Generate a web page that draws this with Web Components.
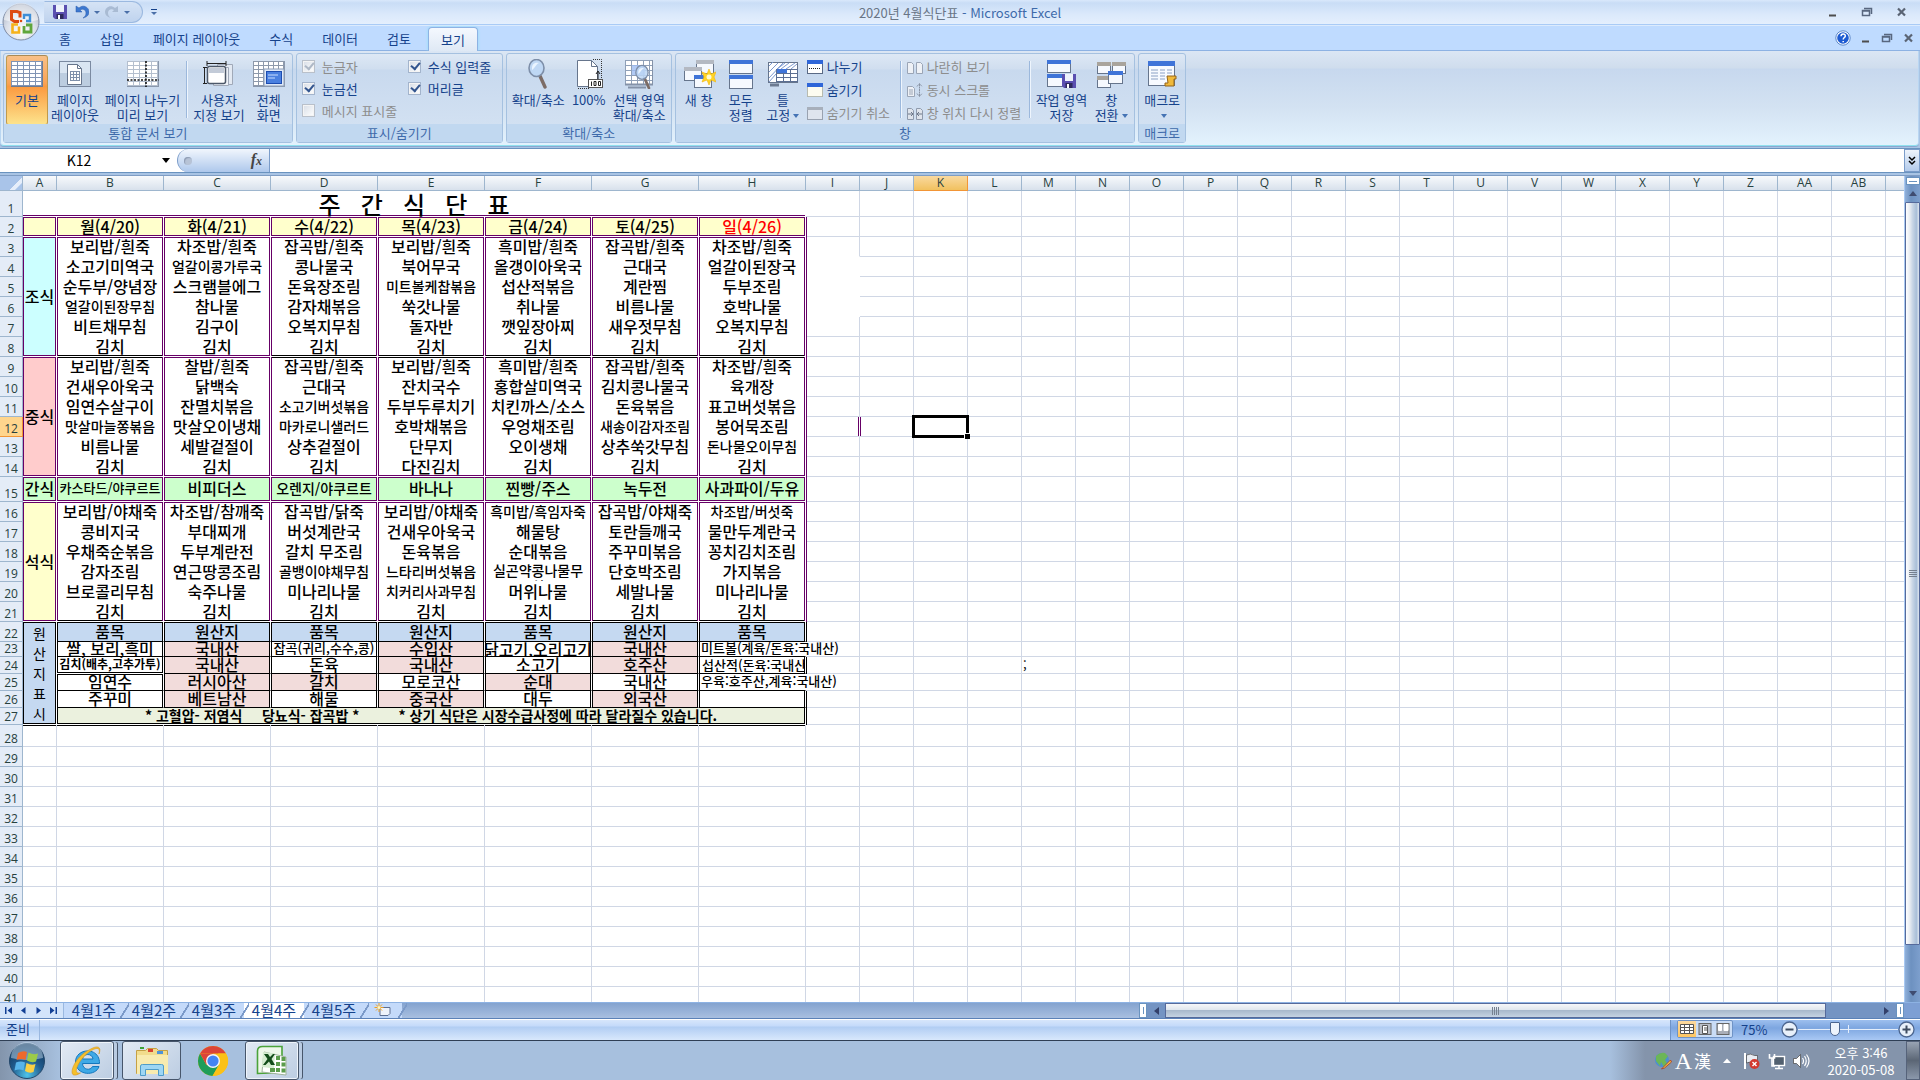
<!DOCTYPE html>
<html lang="ko">
<head>
<meta charset="utf-8">
<title>2020년 4월식단표 - Microsoft Excel</title>
<style>
body{margin:0;height:100vh;display:flex;flex-direction:column;overflow:hidden;background:#a9c4e4;
font:13px/15px "Noto Sans CJK KR","Liberation Sans",sans-serif;color:#15428b}
sheet-area{flex:1;min-height:0}
</style>
</head>
<body>
<title-bar caption="2020년 4월식단표" app="Microsoft Excel"></title-bar>
<tab-strip></tab-strip>
<ribbon-panel>
  <ribbon-group label="통합 문서 보기">
    <ribbon-button icon="grid" active>기본</ribbon-button>
    <ribbon-button icon="page">페이지<br>레이아웃</ribbon-button>
    <ribbon-button icon="breaks">페이지 나누기<br>미리 보기</ribbon-button>
    <ribbon-rule></ribbon-rule>
    <ribbon-button icon="custom">사용자<br>지정 보기</ribbon-button>
    <ribbon-button icon="full">전체<br>화면</ribbon-button>
  </ribbon-group>
  <ribbon-group label="표시/숨기기">
    <ribbon-stack style="--w:106px">
      <ribbon-check checked disabled>눈금자</ribbon-check>
      <ribbon-check checked>눈금선</ribbon-check>
      <ribbon-check disabled>메시지 표시줄</ribbon-check>
    </ribbon-stack>
    <ribbon-stack style="--w:95px">
      <ribbon-check checked>수식 입력줄</ribbon-check>
      <ribbon-check checked>머리글</ribbon-check>
    </ribbon-stack>
  </ribbon-group>
  <ribbon-group label="확대/축소">
    <ribbon-button icon="zoom">확대/축소</ribbon-button>
    <ribbon-button icon="hundred">100%</ribbon-button>
    <ribbon-button icon="zoomsel">선택 영역<br>확대/축소</ribbon-button>
  </ribbon-group>
  <ribbon-group label="창">
    <ribbon-button icon="newwin">새 창</ribbon-button>
    <ribbon-button icon="arrange">모두<br>정렬</ribbon-button>
    <ribbon-button icon="freeze" caret>틀<br>고정</ribbon-button>
    <ribbon-stack style="--w:93px;--h:23px">
      <ribbon-item icon="split">나누기</ribbon-item>
      <ribbon-item icon="hide">숨기기</ribbon-item>
      <ribbon-item icon="unhide" disabled>숨기기 취소</ribbon-item>
    </ribbon-stack>
    <ribbon-rule></ribbon-rule>
    <ribbon-stack style="--w:122px;--h:23px">
      <ribbon-item icon="side" disabled>나란히 보기</ribbon-item>
      <ribbon-item icon="sync" disabled>동시 스크롤</ribbon-item>
      <ribbon-item icon="reset" disabled>창 위치 다시 정렬</ribbon-item>
    </ribbon-stack>
    <ribbon-rule></ribbon-rule>
    <ribbon-button icon="savews">작업 영역<br>저장</ribbon-button>
    <ribbon-button icon="switch" caret>창<br>전환</ribbon-button>
  </ribbon-group>
  <ribbon-group label="매크로">
    <ribbon-button icon="macro" caret>매크로<br></ribbon-button>
  </ribbon-group>
</ribbon-panel>
<formula-bar cell="K12"></formula-bar>
<sheet-area></sheet-area>
<sheet-tabs></sheet-tabs>
<status-bar></status-bar>
<task-bar></task-bar>

<script>
const win=(x,y,w,h,c='#3f74d8')=>`<rect x="${x+.5}" y="${y+.5}" width="${w-1}" height="${h-1}" fill="#f6f9fe" stroke="#66758c"/><rect x="${x}" y="${y}" width="${w}" height="4" fill="${c}"/>`;
const lines=(x,y,w,h,cx,cy,c='#8f9db3')=>{let s='';for(let i=x;i<=x+w;i+=cx)s+=`M${i+.5} ${y}v${h}`;for(let j=y;j<=y+h;j+=cy)s+=`M${x} ${j+.5}h${w}`;return `<path d="${s}" stroke="${c}" fill="none"/>`};
const floppy=(x,y,s)=>`<g transform="translate(${x} ${y}) scale(${s})"><path d="M0 0h14v14H2L0 12z" fill="#5a4fb0"/><rect x="3" y="0" width="8" height="7" fill="#eef2fb"/><rect x="3.5" y="9" width="7" height="5" fill="#2d2a5c"/><rect x="5" y="10" width="2" height="4" fill="#fff"/></g>`;
const lens=(x,y,s)=>`<g transform="translate(${x} ${y}) scale(${s})"><path d="M12 17l5 11" stroke="#7c6c66" stroke-width="3.4" stroke-linecap="round"/><ellipse cx="8.500" cy="9" rx="7.500" ry="8.500" fill="#bcd6f4" fill-opacity=".85" stroke="#7d8ea8" stroke-width="1.600"/><path d="M4 9c0-5 4-6 7-5-3 1-4 5-7 7z" fill="#eaf4ff"/></g>`;
const ICONS={
grid:[32,28,`<rect x=".5" y="1.5" width="31" height="25" fill="#fff" stroke="#6b7a92"/>`+lines(0,1,31,25,6,4,'#8094b4')],
page:[32,28,`<rect x=".5" y="1.5" width="31" height="25" fill="#d9e5f2" stroke="#7b8aa1"/><path d="M1 13h30v13H1z" fill="#bccde0"/><path d="M8.500 4.500h10l4 4v16h-14z" fill="#fff" stroke="#66758c"/><path d="M18.500 4.500v4h4" fill="none" stroke="#66758c"/>`+lines(11,11,9,10,3,3,'#7f90aa')],
breaks:[32,28,`<rect x=".5" y="1.500" width="31" height="25" fill="#fff" stroke="#8a98ad"/>`+lines(0,1,31,25,6,4,'#b4bfce')+`<path d="M19 1v26M0 20h32" stroke="#111" stroke-width="1.600" stroke-dasharray="2 1.500"/>`],
custom:[32,28,`<path d="M14.500 4.500h15v20h-15z" fill="#e3e9f2" stroke="#a0a9b8"/><path d="M10.500 7.500h15v18h-15z" fill="#eef2f8" stroke="#a0a9b8"/><rect x="4.500" y="6.500" width="18" height="17" rx="2" fill="#fff" stroke="#4d5869" stroke-width="1.500"/><rect x="6" y="8" width="15" height="5" fill="#c3cbd8"/><path d="M4 3.500h19M4 1v5M23 1v5M1.500 7v17M0 7.500h4M0 23.500h4" stroke="#222" fill="none"/>`],
full:[32,28,`<rect x=".5" y="1.500" width="31" height="25" fill="#fff" stroke="#8a98ad"/>`+lines(0,1,31,25,5,4,'#8d99ab')+`<rect x="11" y="9" width="20" height="17" fill="#dfe9f8" stroke="#8d9db5"/><rect x="13.500" y="11.500" width="15" height="12" fill="#4a80e0" stroke="#1c4cb0"/><path d="M15 15h10M15 18h7" stroke="#c9deff"/>`],
zoom:[22,30,lens(1,0,1)],
hundred:[30,30,`<path d="M3.500 1.500h14l6 6v20h-20z" fill="#fff" stroke="#66758c"/><path d="M17.500 1.500v6h6" fill="none" stroke="#66758c"/><path d="M19 .5h8.500v20M4 29.500h11" stroke="#333" fill="none" stroke-dasharray="1 1"/><path d="M24 12v8M22 15l2-3 2 3" stroke="#222" fill="none"/><rect x="14.500" y="20.500" width="14" height="8" fill="#fff" stroke="#555"/><path d="M17.500 22.500v4.500M20 22.500h2v4h-2zM24.500 22.500h2v4h-2z" stroke="#222" fill="none"/>`],
zoomsel:[32,30,`<rect x="2.500" y="1.500" width="27" height="24" fill="#fff" stroke="#8492a8"/>`+lines(2,1,27,24,6,5,'#8fa0b8')+`<rect x="9" y="6" width="13" height="10" fill="#9dbdf2" opacity=".8"/><path d="M2 25.500h28M5 28.500h18" stroke="#8492a8" stroke-width="2"/>`+lens(12,6,.82)],
newwin:[34,30,win(14,1,18,14,'#b4b9c2')+win(2,8,18,14,'#b4b9c2')+win(12,16,18,13)+`<path d="M27 10l2 5 5-2-2 5 2 5-5-2-2 5-2-5-5 2 2-5-2-5 5 2z" fill="#ffd426" stroke="#f3b50c" stroke-width=".6"/><circle cx="27" cy="18" r="2.500" fill="#fffbd0"/>`],
arrange:[26,30,win(1,1,24,14)+win(1,16,24,14)],
freeze:[32,28,`<rect x="1.500" y="2.500" width="29" height="20" fill="#fff" stroke="#66758c"/><path d="M2 6l4-4M2 12l9-9M2 18l14-15M10 9l8-6M14 9l8-6M19 9l9-6M2 22l7-8M24 9l6-5" stroke="#7e9bd0" fill="none"/>`+lines(9,9,21,13,7,4,'#5c6f92')+`<rect x="10" y="9" width="10" height="4" fill="#3f74d8"/><path d="M3 25h9" stroke="#6d7b91" stroke-width="3"/>`],
split:[16,16,`<rect x=".5" y="2.500" width="15" height="12" fill="#fff" stroke="#5a6a85"/><rect y="1" width="16" height="4" fill="#2f66d8"/><path d="M2 9.500h12" stroke="#222" stroke-dasharray="1 1"/>`],
hide:[16,16,`<rect x=".5" y="2.500" width="15" height="12" fill="#fdfcf0" stroke="#8b8b70" stroke-dasharray="1 1"/><rect y="1" width="16" height="4" fill="#2f66d8"/>`],
unhide:[16,16,`<rect x=".5" y="2.500" width="15" height="12" fill="#dfe5ee" stroke="#99a2b0"/><rect y="2" width="16" height="3" fill="#a7afbb"/>`],
side:[16,16,`<path d="M.5 3.500h4l2 2v9h-6zM9.500 3.500h4l2 2v9h-6z" fill="#eef1f6" stroke="#9aa5b6"/>`],
sync:[16,16,`<path d="M.5 4.500h5l2 2v8h-7z" fill="#eef1f6" stroke="#9aa5b6"/><path d="M2 8h4M2 10h4M2 12h4" stroke="#9aa5b6"/><path d="M12.500 2v12M10 4.500l2.500-3 2.500 3M10 11.500l2.500 3 2.500-3" stroke="#8a94a5" fill="none" stroke-dasharray="2 .5"/>`],
reset:[16,16,`<path d="M.5 3.500h4l2 2v9h-6zM9.500 3.500h4l2 2v9h-6z" fill="#dfe4ec" stroke="#8f9aac"/><path d="M1 9h5M10 9h5M4 7l2 2-2 2M12 7l-2 2 2 2" stroke="#6d788a" fill="none"/>`],
savews:[32,30,win(2,1,24,13)+win(2,15,24,13)+floppy(17,15,1)],
switch:[32,30,win(2,3,14,12,'#a9a49c')+win(17,3,14,12,'#a9a49c')+win(2,17,14,12,'#a9a49c')+win(13,12,15,13)],
macro:[32,28,`<rect x="2.500" y="2.500" width="26" height="23" fill="#f7faff" stroke="#66758c"/><rect x="2" y="1" width="27" height="5" fill="#3f74d8"/><path d="M5 10h7M5 13h7M5 16h7M5 19h7M14 10h5M14 13h5M14 16h5M14 19h5M21 10h5M21 13h5" stroke="#8aa0c4"/><path d="M21 16h9v3h-2v7h-9v-3h3z" fill="#f0b93a" stroke="#94651a"/>`],
save:[14,14,floppy(0,0,1)],
undo:[14,14,`<path d="M1 1v6h6L5 5c3-2 6 0 6 3 0 2-1 4-3 5 4-1 6-3 6-6 0-5-6-8-10-4z" fill="#3c78d0" stroke="#2858a8" stroke-width=".5"/>`],
redo:[14,14,`<path d="M13 1v6H7l2-2C6 3 3 5 3 8c0 2 1 4 3 5-4-1-6-3-6-6 0-5 6-8 10-4z" fill="#a9bbd3"/>`],
min:[10,12,`<path d="M1 9.500h7" stroke="#4d4d4d" stroke-width="2"/>`],
max:[12,12,`<path d="M3 2.500h7.500V8M1.500 4.500h7v5h-7zM1 5h8" stroke="#58677f" fill="none" stroke-width="1.500"/>`],
close:[12,12,`<path d="M2 2.500l7 7M9 2.500l-7 7" stroke="#5a6474" stroke-width="2.200"/>`],
help:[16,16,`<circle cx="8" cy="8" r="7.200" fill="#fff" stroke="#5b87c9"/><circle cx="8" cy="8" r="5.800" fill="#1d5bd2"/><path d="M6 6.300c0-3 4.300-3 4.300-.4C10.300 7.600 8.200 7.500 8.200 9.400M8.200 11v1.300" stroke="#fff" stroke-width="1.500" fill="none"/>`],
office:[38,38,`<defs><radialGradient id="o" cx=".5" cy=".75" r=".7"><stop offset="0" stop-color="#fff"/><stop offset=".6" stop-color="#d9dee8"/><stop offset="1" stop-color="#aab3c4"/></radialGradient></defs><circle cx="19" cy="19" r="18" fill="url(#o)" stroke="#7f8ca5"/><path d="M2 17a17 17 0 0134 0q-17 5-34 0z" fill="#fff" opacity=".5"/><g fill="none" stroke-width="3"><path d="M18 14.500v-5l-3-1H9.500v8l3 2H17" stroke="#dd4a12"/><path d="M22 16v-4h6v6h-4" stroke="#3f8fd8" stroke-width="2.400"/><path d="M16 21.500h-5.500v8H17v-6" stroke="#f6b21a" stroke-width="2.600"/><path d="M22 23v6h7v-7h-5" stroke="#5fa63c" stroke-width="2.800"/></g><circle cx="19" cy="18" r="1.300" fill="#dd4a12"/>`],
first:[9,9,`<path d="M1 1h1.500v7H1zM8 1v7L3.500 4.500z" fill="#123f94"/>`],
prev:[9,9,`<path d="M6.500 1v7L2 4.500z" fill="#123f94"/>`],
next:[9,9,`<path d="M2.500 1v7L7 4.500z" fill="#123f94"/>`],
last:[9,9,`<path d="M6.500 1H8v7H6.500zM1 1v7l4.500-3.500z" fill="#123f94"/>`],
newsheet:[18,14,`<path d="M6 4.500h10v6l-2 2H6z" fill="#eef3fb" stroke="#5d6f92"/><path d="M5 0v9M.5 4.500h9M2 1.500l6 6M8 1.500l-6 6" stroke="#f0a020"/><circle cx="5" cy="4.500" r="1.500" fill="#fff8c0"/>`],
vnorm:[18,16,`<path d="M2.500 3.500h13v9h-13zM2.500 6.500h13M2.500 9.500h13M6.500 3.500v9M11.500 3.500v9" fill="#fff" stroke="#555"/>`],
vpage:[18,16,`<rect x="3" y="2.500" width="12" height="11" fill="#b9bec7" stroke="#666"/><path d="M6.500 4.500h5v8h-5z" fill="#fff" stroke="#555"/><path d="M8 7h3M8 9h3" stroke="#555"/>`],
vbreak:[18,16,`<rect x="3" y="2.500" width="12" height="11" fill="#a9aeb8" stroke="#666"/><path d="M4.500 3.500h3v6h-3zM10 3.500h4v6h-4z" fill="#fff" stroke="#fff"/>`],
minus:[17,17,`<circle cx="8.500" cy="8.500" r="7.500" fill="#e8f0fa" stroke="#4c6690" stroke-width="1.300"/><path d="M4.500 8.500h8" stroke="#3f4c60" stroke-width="2"/>`],
plus:[17,17,`<circle cx="8.500" cy="8.500" r="7.500" fill="#e8f0fa" stroke="#4c6690" stroke-width="1.300"/><path d="M4.500 8.500h8M8.500 4.500v8" stroke="#3f4c60" stroke-width="2"/>`],
start:[38,38,`<defs><radialGradient id="s" cx=".5" cy=".9" r=".9"><stop offset="0" stop-color="#4fc4ea"/><stop offset=".5" stop-color="#205a8c"/><stop offset="1" stop-color="#0f3358"/></radialGradient></defs><circle cx="19" cy="19" r="17.500" fill="url(#s)" stroke="#23476a"/><path d="M3 16a16 16 0 0132 0q-16 4-32 0z" fill="#d6eafa" opacity=".45"/><path d="M10 11q5-3 9-1l-1.500 8q-4-2-9 0z" fill="#ee6a2c"/><path d="M20.500 10.500q5 3 9.500 1l-2 8q-4 2-9-1z" fill="#9ccb48"/><path d="M8 20.500q5-2 9 0l-1.500 8q-4-2-9 0z" fill="#58b4ea"/><path d="M18.500 21q5 3 9 1l-2 8q-4 2-8.500-1z" fill="#fbd044"/>`],
ie:[32,32,`<path d="M28.500 18.500H11.500c.3 6.500 8 7.500 10 3h6.500C25 31.500 5 31 4.500 17 4.500 2.500 29 1.500 28.500 18.500zM11.500 14h10.500c-.5-6-10-6-10.500 0z" fill="#3fa9e6" stroke="#1577bd"/><path d="M28 9c3-8-2-9-10-4C7 10-1 24 1.500 29c1 2 5 1 8-1C5 29 4 26 7 20 11 12 19 5 25 3.500c3-.5 4 1 3 5.500z" fill="#f5c02c" stroke="#d9961a" stroke-width=".6"/>`],
folder:[34,32,`<path d="M1.500 5.500h9l2-2h9l2 2h9v23h-31z" fill="#f1dc8c" stroke="#c5a044"/><rect x="5" y="2" width="4" height="2" fill="#3da336"/><rect x="13" y="4" width="5" height="3" fill="#d9432f"/><rect x="22" y="6" width="6" height="3" fill="#4d93da"/><path d="M2 10h31v19H2z" fill="#f8ebaf"/><path d="M5.500 30.500V21q0-1.500 2-1.500h19q2 0 2 1.500v9.500h-5v-6h-13v6z" fill="#9ed6f4" stroke="#4f9cc8"/>`],
chrome:[32,32,`<circle cx="16" cy="16" r="15" fill="#fbc116"/><path d="M3 8.500A15 15 0 0129 8.500H16z" fill="#db4437"/><path d="M3 8.500A15 15 0 0015.500 31L22 19.500 9.500 20z" fill="#1f9d58"/><path d="M3 8.500L9.500 20 16 8.500z" fill="#db4437"/><path d="M29 8.500A15 15 0 0115.500 31l7-11.500L21 8.500z" fill="#fbc116"/><circle cx="16" cy="16" r="7" fill="#f5f5f5"/><circle cx="16" cy="16" r="5.600" fill="#4484f3"/>`],
xl:[32,32,`<path d="M1.500 28.500V6q0-4.500 5-4.500h19.500v26z" fill="#eef7ea" stroke="#4ba33a" stroke-width="1.600"/><path d="M8 7l22 5v18l-24-3z" fill="#fff" stroke="#9fb39a"/><path d="M7 7l12 1.500-1 15L6 22z" fill="#d5ecd0"/><path d="M8 9h4l2 3 3-3h2l-3.500 5 3.500 6h-4l-2-3.500L9.500 20H7l4.500-6z" fill="#134c1a"/><path d="M20 11h4v4h-4zM25.500 12h4v4h-4zM20 17h4v4h-4zM25.500 17.500h4v4h-4zM14 23h5v4h-5zM20 23h4v4h-4zM25.500 23.500h4v4h-4z" fill="#5b9c4c"/>`],
globe:[18,18,`<circle cx="8" cy="8" r="7" fill="#4d8fd0"/><path d="M2 4q4-4 9-3l3 3-3 4 2 3-3 4-3-5-1 4-4-5z" fill="#6cb658"/><path d="M16.500 8l-7 7-2 2 3-1 7-6z" fill="#f8c53c" stroke="#a3322a" stroke-width=".8"/>`],
up:[12,12,`<path d="M2 8l4-4.500L10 8z" fill="#fff"/>`],
flag:[20,18,`<path d="M3 1v16" stroke="#fff" stroke-width="2"/><path d="M4.500 3q4-2 8 .5h3V11h-4q-3-2-7 0z" fill="#e8ecf2" stroke="#333" stroke-width=".6"/><circle cx="12.500" cy="12" r="5" fill="#d2392e"/><path d="M10.500 10l4 4M14.500 10l-4 4" stroke="#fff" stroke-width="1.400"/>`],
net:[18,18,`<rect x="5.500" y="4.500" width="11" height="9" fill="#52606f" stroke="#fff" stroke-width="1.400"/><path d="M7 16.500h8M11 14v2" stroke="#fff" stroke-width="1.500"/><path d="M1.500 2v4h5V2M4 6v8h3" stroke="#fff" stroke-width="1.600" fill="none"/>`],
vol:[18,18,`<path d="M1.500 6.500h3l4-4v13l-4-4h-3z" fill="#fff" stroke="#444" stroke-width=".7"/><path d="M10.500 6q2 3 0 6M12.500 4q3.500 5 0 10M14.500 2.500q5 6.500 0 13" stroke="#fff" fill="none" stroke-width="1.200"/>`]
};
const icon=(n,extra='')=>{const [w,h,b]=ICONS[n];return `<svg width="${w}" height="${h}" viewBox="0 0 ${w} ${h}" aria-hidden="true" ${extra}>${b}</svg>`};
const BASE=`:host,*{box-sizing:border-box}button{font:inherit;color:inherit;background:none;border:0;padding:0;margin:0}svg{display:block;flex:none}input{font:inherit;margin:0}`;
function define(name,css,html,after){
  customElements.define(name,class extends HTMLElement{
    connectedCallback(){
      if(this.shadowRoot)return;
      this.attachShadow({mode:'open'}).innerHTML=`<style>${BASE}${css}</style>`+(typeof html==='function'?html(this):html);
      if(after)after(this.shadowRoot,this);
    }
  });
}
const wins=`<button aria-label="최소화">${icon('min')}</button><button aria-label="이전 크기로">${icon('max')}</button><button aria-label="닫기">${icon('close')}</button>`;

define('title-bar',`
:host{display:flex;position:relative;z-index:2;height:25px;justify-content:space-between;background:linear-gradient(#d9e8fb,#c9ddf6 3px,#dbe9fb 60%,#e4effd);border-bottom:1px solid #a9cbf6}
.orb{position:absolute;left:2px;top:3px}
.bar,.ctl{flex:1 1 0;display:flex;align-items:center;padding:0 12px}
.qat{display:flex;align-items:center;gap:8px;height:22px;margin-left:32px;padding:0 8px 0 8px;width:99px;border:1px solid #9bb9e0;border-left-color:transparent;border-radius:0 12px 12px 0;background:linear-gradient(#d5e3f5,#bfd3ee)}
.c{width:0;height:0;border:3px solid transparent;border-top-color:#4a6fa8;border-bottom:0}
.qat .c{margin-left:-3px;margin-right:-3px}
.more{margin-left:8px;border-top:1px solid #15428b;padding-top:2px}
h1{margin:0;font:inherit;line-height:25px;color:#3e6aaa;white-space:pre}
h1 span{color:#697586}
.ctl{justify-content:flex-end;gap:23px}`,
el=>`<button class="orb" aria-label="Office 단추">${icon('office')}</button>
<div class="bar"><div class="qat"><button aria-label="저장">${icon('save')}</button><button aria-label="취소">${icon('undo')}</button><i class="c"></i><button aria-label="다시 실행">${icon('redo')}</button><i class="c"></i></div><span class="more"><i class="c" style="display:block"></i></span></div>
<h1><span>${el.getAttribute('caption')}</span> - ${el.getAttribute('app')}</h1><div class="ctl">${wins}</div>`);

define('tab-strip',`
:host{display:flex;align-items:flex-end;height:26px;padding:0 5px 0 47px;background:#bfdbff;border-top:1px solid #dcebfd;border-bottom:1px solid #8db2e3}
nav{display:flex;flex:1;align-self:stretch;align-items:flex-end;gap:5px}
nav button{padding:0 12px;line-height:23px;height:24px}
nav .on{padding:0 12px;border:1px solid #8db2e3;border-bottom:0;border-radius:4px 4px 0 0;background:linear-gradient(#f4f8fe,#dfe9f5);box-shadow:0 0 3px #8fe0f5;height:24px;margin-bottom:-1px;line-height:21px}
.ctl{display:flex;align-items:center;gap:10px;height:24px}`,
`<nav>${['홈','삽입','페이지 레이아웃','수식','데이터','검토','보기'].map(t=>`<button${t==='보기'?' class="on"':''}>${t}</button>`).join('')}</nav><div class="ctl"><button aria-label="도움말">${icon('help')}</button>${wins}</div>`);

define('ribbon-panel',`
:host{display:flex;gap:3px;height:95px;padding:2px 2px 2px;margin:0 1px 2px 0;background:linear-gradient(#dbe6f4,#cfdded 17px,#c7d8ee 18px,#d3e2f2 60%,#e3f2fd);border:1px solid #b9d6f2;border-top:0;border-bottom-color:#8fe0ee;border-radius:0 0 4px 4px;box-shadow:0 1px #8aa8d0}`,`<slot></slot>`);

define('ribbon-group',`
:host{display:flex;flex-direction:column;border:1px solid #a5c1e0;border-radius:3px;background:linear-gradient(#dde8f5,#d0deef 15px,#c8d9ee 16px,#d5e3f3)}
.row{flex:1;display:flex;padding:1px 2px 0;min-height:0}
.lab{height:18px;line-height:17px;text-align:center;background:#c1d8f0;color:#3e6aaa}`,
el=>`<div class="row"><slot></slot></div><div class="lab">${el.getAttribute('label')}</div>`);

define('ribbon-rule',`:host{display:block;width:1px;margin:6px 3px 6px;background:#9cb8dc;box-shadow:1px 0 #eef5fd}`,``);

define('ribbon-button',`
:host{display:block}
button{display:flex;flex-direction:column;align-items:center;min-width:42px;height:70px;padding:0 2px;border:1px solid transparent;border-radius:3px;white-space:nowrap}
.i{height:36px;display:flex;align-items:center}
.t{line-height:15px;text-align:center}
:host([active]) button{border-color:#a98a55 #c09a4c #f2c94c;background:linear-gradient(#f8c088,#f9a355 40%,#fb9a40 45%,#fde38c)}
.c{display:inline-block;border:3px solid transparent;border-top:4px solid #4573b4;border-bottom:0;margin-left:3px;vertical-align:2px}`,
el=>`<button><span class="i">${icon(el.getAttribute('icon'))}</span><span class="t"><slot></slot>${el.hasAttribute('caret')?'<i class="c"></i>':''}</span></button>`);

define('ribbon-stack',`:host{display:flex;flex-direction:column;width:var(--w);padding:0 3px}::slotted(*){height:var(--h,22px)}`,`<slot></slot>`);
define('ribbon-check',`
:host{display:flex}
label{display:flex;align-items:center;gap:7px;white-space:nowrap}
input{appearance:none;width:13px;height:13px;border:1px solid #a3b4cc;background:linear-gradient(135deg,#d7dde6,#fff);box-shadow:inset 0 0 0 1px #f4f4f4;position:relative}
input:checked::after{content:"";position:absolute;left:2px;top:1px;width:7px;height:4px;border:solid #34568f;border-width:0 0 2px 2px;transform:rotate(-50deg)}
:host([disabled]) label{color:#8d8d8d}:host([disabled]) input{border-color:#b9c0ca}:host([disabled]) input::after{border-color:#aeb8c6}`,
el=>`<label><input type="checkbox"${el.hasAttribute('checked')?' checked':''}${el.hasAttribute('disabled')?' disabled':''}><span><slot></slot></span></label>`);
define('ribbon-item',`
:host{display:flex}button{display:flex;align-items:center;gap:4px;white-space:nowrap}
button:disabled{color:#8d8d8d}`,
el=>`<button${el.hasAttribute('disabled')?' disabled':''}>${icon(el.getAttribute('icon'))}<span><slot></slot></span></button>`);

define('formula-bar',`
:host{display:flex;height:25px;border:1px solid #6a93bf;border-width:1px 0;background:#fff;color:#000;margin-bottom:2px}
input{border:0;background:none;outline:0}
.name{display:flex;align-items:center;width:177px}
.name input{width:158px;text-align:center;font-size:14px}
.c{border:4px solid transparent;border-top:5px solid #000;border-bottom:0;margin-left:4px}
.fx{display:flex;align-items:center;justify-content:space-between;width:93px;padding:0 7px 0 6px;border:1px solid #7b9cc9;border-width:0 1px 0 1px;border-radius:12px 0 0 12px;background:linear-gradient(#f1f6fd,#aec8ec)}
.fx b{width:8px;height:8px;border-radius:50%;background:#b7c3d6;box-shadow:inset 1px 1px 1px #8e9cb4}
.fx span{font:italic bold 16px/20px "Liberation Serif",serif;color:#444}
.fx small{font-size:12px}
.f{flex:1;min-width:0}
.x{width:16px;border:1px solid #7b9cc9;background:linear-gradient(#eef4fc,#b3cbeb);display:flex;align-items:center;justify-content:center}`,
el=>`<div class="name"><input aria-label="이름 상자" value="${el.getAttribute('cell')}"><i class="c"></i></div><div class="fx"><b></b><span>f<small>x</small></span></div><input class="f" aria-label="수식 입력줄"><button class="x" aria-label="수식 입력줄 확장"><svg width="8" height="10"><path d="M1 1l3 3 3-3M1 5l3 3 3-3" stroke="#000" fill="none" stroke-width="1.500"/></svg></button>`);

/* Sheet data: each leading ~ takes a cell one text size down */
const P='#660066',K='#000',G='#d0d7e5';
const HEAD=['','월(4/20)','화(4/21)','수(4/22)','목(4/23)','금(4/24)','토(4/25)','일(4/26)'];
const DATA={
3:'보리밥/흰죽|차조밥/흰죽|잡곡밥/흰죽|보리밥/흰죽|흑미밥/흰죽|잡곡밥/흰죽|차조밥/흰죽',
4:'소고기미역국|~얼갈이콩가루국|콩나물국|북어무국|올갱이아욱국|근대국|얼갈이된장국',
5:'순두부/양념장|스크램블에그|돈육장조림|~미트볼케찹볶음|섭산적볶음|계란찜|두부조림',
6:'~얼갈이된장무침|참나물|감자채볶음|쑥갓나물|취나물|비름나물|호박나물',
7:'비트채무침|김구이|오복지무침|돌자반|깻잎장아찌|새우젓무침|오복지무침',
8:'김치|김치|김치|김치|김치|김치|김치',
9:'보리밥/흰죽|찰밥/흰죽|잡곡밥/흰죽|보리밥/흰죽|흑미밥/흰죽|잡곡밥/흰죽|차조밥/흰죽',
10:'건새우아욱국|닭백숙|근대국|잔치국수|홍합살미역국|김치콩나물국|육개장',
11:'임연수살구이|잔멸치볶음|~소고기버섯볶음|두부두루치기|치킨까스/소스|돈육볶음|표고버섯볶음',
12:'~맛살마늘쫑볶음|맛살오이냉채|~마카로니샐러드|호박채볶음|우엉채조림|~새송이감자조림|봉어묵조림',
13:'비름나물|세발겉절이|상추겉절이|단무지|오이생채|상추쑥갓무침|~돈나물오이무침',
14:'김치|김치|김치|다진김치|김치|김치|김치',
15:'~~카스타드/야쿠르트|비피더스|~오렌지/야쿠르트|바나나|찐빵/주스|녹두전|사과파이/두유',
16:'보리밥/야채죽|차조밥/참깨죽|잡곡밥/닭죽|보리밥/야채죽|~흑미밥/흑임자죽|잡곡밥/야채죽|~차조밥/버섯죽',
17:'콩비지국|부대찌개|버섯계란국|건새우아욱국|해물탕|토란들깨국|물만두계란국',
18:'우채죽순볶음|두부계란전|갈치 무조림|돈육볶음|순대볶음|주꾸미볶음|꽁치김치조림',
19:'감자조림|연근땅콩조림|~골뱅이야채무침|~느타리버섯볶음|~실곤약콩나물무침|단호박조림|가지볶음',
20:'브로콜리무침|숙주나물|미나리나물|~치커리사과무침|머위나물|세발나물|미나리나물',
21:'김치|김치|김치|김치|김치|김치|김치',
22:'품목|원산지|품목|원산지|품목|원산지|품목',
23:'쌀, 보리,흑미|국내산|~~잡곡(귀리,수수,콩)|수입산|닭고기,오리고기|국내산|미트볼(계육/돈육:국내산)',
24:'~~~김치(배추,고추가투)|국내산|돈육|국내산|소고기|호주산|섭산적(돈육:국내산)',
25:'임연수|러시아산|갈치|모로코산|순대|국내산|우육:호주산,계육:국내산)',
26:'주꾸미|베트남산|해물|중국산|대두|외국산|'};
const SIDE={3:['조식','#ccffff',6],9:['중식','#ffcccc',6],15:['간식','#ccffcc',1],16:['석식','#ffffcc',6],22:['원<br>산<br>지<br>표<br>시','#c5d9f1',6]};
const ROSE={23:[2,4,6],24:[2,4,6],25:[2,3,5],26:[2,4,6]};
const HGT=r=>r===1?26:r===15?25:r===23?15:r>=24&&r<=27?17:r===28?22:20;
const name=i=>i<26?String.fromCharCode(65+i):'A'+String.fromCharCode(39+i);
const box=o=>{const a=[];if(o.l)a.push(`inset 1px 0 ${o.l}`);if(o.r)a.push(`inset -1px 0 ${o.r}`);if(o.t)a.push(`inset 0 1px ${o.t}`);if(o.b)a.push(`inset 0 -1px ${o.b}`);return a.length?`box-shadow:${a.join(',')};`:''};
const strip=(c,pos)=>`linear-gradient(${c},${c}) ${pos} no-repeat border-box`;
function sheet(){
  const N=30;
  let h='<colgroup><col style="width:23px"><col style="width:34px">'+'<col style="width:107px">'.repeat(7)+'<col style="width:54px">'.repeat(N-8)+'</colgroup><thead><tr><th class="corner"></th>';
  for(let c=0;c<N;c++)h+=`<th${c===10?' class="hot"':''}>${c<28?name(c):''}</th>`;
  h+='</tr></thead><tbody>';
  for(let r=1;r<=41;r++){
    const H=HGT(r);
    h+=`<tr style="height:${H}px"><th${r===12?' class="hot"':''}>${r}</th>`;
    for(let c=0;c<N;c++){
      let s='',t='',cls='';
      if(r===1&&c<8){if(c===0)h+=`<td class="m title" colspan="8" style="${box({b:P})}"><div>주   간   식   단   표</div></td>`;continue}
      if(c<8&&r<=27){
        if(c===0&&r>2){
          if(SIDE[r]){const [x,bg,n]=SIDE[r],k=r===22?K:P;h+=`<td class="m${r===22?' vert':''}" rowspan="${n}" style="background:${bg};background-clip:padding-box;${box({l:k,r:k,t:k,b:k})}"><div>${x}</div></td>`}
          continue;
        }
        if(r===27){if(c===1)h+=`<td class="m s1 note" colspan="7" style="background:#ebf1de;${box({l:K,r:K,b:K})}"><div>* 고혈압- 저염식     당뇨식- 잡곡밥 *          * 상기 식단은 시장수급사정에 따라 달라질수 있습니다.</div></td>`;continue}
        cls='m';
        if(r===2){t=HEAD[c];s='background:#ffffcc;'+(c===7?'color:#f00;':'')+box({l:P,r:P,t:P,b:P})}
        else{
          t=DATA[r].split('|')[c-1];
          const k=r>=22?K:P,o={l:k,r:k};
          const split=(c===2?P:K);
          if(r===3||r===15||r===16)o.t=P;
          if(r===14||r===15)o.b=P;
          if(r===8)o.b=split;
          if(r===9)o.t=split;
          if(r===21)o.b=K;
          if(r===22)o.t=K;
          if(r<21&&r!==8&&r!==14&&r!==15)s+='border-bottom:0;';
          if(r>=22&&!(r===24&&c===1))s+='border-bottom-color:#000;';
          if(r===24&&c===1)o.b=K;
          if(r===25&&c===1)o.t=K;
          if(c===7&&(r===23||r===25))delete o.r;
          if(r===15)s+='background:#ccffcc;';
          if(r===22)s+='background:#c5d9f1;';
          if(ROSE[r]&&ROSE[r].includes(c))s+='background:#f2dcdb;';
          if(c===7&&r>22&&r<26)cls+=r===24?' left clip':' left';
          if(c===5&&(r===19||r===23))cls+=r===19?' wrap':' clip';
          const n=t.match(/^~*/)[0].length;if(n){cls+=' s'+n;t=t.slice(n)}
          s+=box(o);
        }
      }else{
        const o={};
        if(c===8&&r>=2&&r<=27&&r!==23&&r!==25){
          s+=`border-bottom-color:transparent;background:${strip(r>=22?K:P,'0 0/1px 100%')}${r>=3&&r<=6?'':','+strip(G,'0 100%/100% 1px')};`;
        }
        if(c<8&&r===28)o.t=K;
        if(c===8&&r>=4&&r<=6)s+='border-right-color:#fff;';
        if(r===12&&c===8){o.r=P;s+='border-right-color:#fff;'}
        if(r===12&&c===9)o.l=P;
        if(r===12&&c===10)cls='sel';
        if(r===24&&c===12)t=';';
        s+=box(o);
      }
      h+=`<td${cls?` class="${cls}"`:''}${s?` style="${s}"`:''}>${t||cls==='sel'?`<div>${t}</div>`:''}</td>`;
    }
    h+='</tr>';
  }
  return h+'</tbody>';
}
define('sheet-area',`
:host{display:flex;overflow:hidden;border-top:1px solid #7f9dc4;background:#fff}
.view{flex:1;min-width:0;overflow:hidden}
table{border-spacing:0;table-layout:fixed;color:#000}
th{padding:0;font:12px/15px "Open Sans","Noto Sans",sans-serif;color:#27413e;border-right:1px solid #9eb6ce;border-bottom:1px solid #9eb6ce}
thead tr{height:15px}
thead th{height:15px;line-height:14px;background:linear-gradient(#f8fafc,#d8e1ec)}
tbody th{background:#e4ecf7;vertical-align:bottom;line-height:14px;height:inherit}
.corner{background:linear-gradient(135deg,#a9c4e9 65%,#e6eefa 66%,#e6eefa 80%,#a9c4e9 81%)}
thead .hot{background:linear-gradient(#f9d99f,#f1c15f);border-color:#f29536}
tbody .hot{background:#ffd58d;border-color:#f29536}
td{padding:0 0 0 1px;border-right:1px solid #d0d7e5;border-bottom:1px solid #d0d7e5;font-size:13px}
td.m{padding:0 0 2px;border-color:#fff;text-align:center;font-size:16px;font-weight:500;white-space:pre}
td>div{height:0;display:flex;align-items:center;justify-content:center;line-height:20px}
td:not(.m)>div{justify-content:flex-start}
td.s1{font-size:14px}td.s2{font-size:13px}td.s3{font-size:12px}
td.s3,td.note{font-weight:700}
td.title{font-size:24px;padding:0}
td.title>div{line-height:24px}
td.vert{font-weight:400;font-size:14px;padding:0}td.vert>div{height:100px;line-height:20px}
td.left{font-size:13px}td.left>div{justify-content:flex-start;padding-left:2px}
td.clip{padding:0}
td.clip>div{height:14px;overflow:hidden;margin:0 1px}
td.wrap{vertical-align:top;padding:0}
td.wrap>div{display:block;height:19px;overflow:hidden;white-space:normal;word-break:break-all;padding:0 6px;line-height:16px}
td.sel{position:relative}
td.sel>div{position:absolute;inset:-2px;height:auto;border:3px solid #000;margin:0}
td.sel>div::after{content:"";position:absolute;right:-4px;bottom:-4px;width:5px;height:5px;background:#000;box-shadow:-1px -1px 0 #fff}
.vs{width:16px;display:flex;flex-direction:column;align-items:center;background:linear-gradient(90deg,#8fb0da,#6d91c0 40%,#7d9fcd);border-left:1px solid #a9c9f2}
.box{width:14px;height:8px;margin-top:1px;background:#fff;border:1px solid #6a93bf;display:flex;align-items:center;justify-content:center}
.box i{width:8px;height:1px;background:#6a93bf}
.a{height:17px;display:flex;align-items:center}
.a i{border:4px solid transparent;border-bottom:5px solid #3f4c70;border-top:0}
.dn{flex:none;height:57px;align-items:flex-end;padding-bottom:6px}.dn i{border-bottom:0;border-top:5px solid #3f4c70}
.th{flex:1;width:15px;border:1px solid #566a9b;border-radius:1px;background:linear-gradient(90deg,#fff,#e6ebf1 30%,#c9d6e5 50%,#a9bfd8 80%,#dfe6ef);display:flex;align-items:center;justify-content:center}
.th i{width:8px;height:8px;background:repeating-linear-gradient(#75808f 0 1px,transparent 1px 2px)}`,
()=>`<div class="view"><table>${sheet()}</table></div><div class="vs"><div class="box"><i></i></div><div class="a"><i></i></div><div class="th"><i></i></div><div class="a dn"><i></i></div></div>`,
root=>{const t=root.querySelector('table');let w=0;t.querySelectorAll('col').forEach(c=>w+=parseInt(c.style.width));t.style.width=w+'px'});

define('sheet-tabs',`
:host{display:flex;height:17px;background:linear-gradient(#84a3cf,#a8bfe0);border:1px solid #8db2e3;border-width:1px 0;border-bottom-color:#5b82b8;overflow:hidden}
.nav{display:flex;align-items:center;gap:6px;padding:0 4px;width:64px;background:#d3e4fa;border-right:1px solid #9ab8e0}
.tabs{display:flex;flex:1;min-width:0;height:15px}
.tabs button{width:60px;font-size:15px;line-height:13px;padding-bottom:2px;display:flex;align-items:center;justify-content:center;white-space:nowrap;background:#c4dafa;position:relative}
.tabs button::after{content:"";position:absolute;right:-5px;top:0;width:9px;height:15px;background:linear-gradient(122deg,transparent 47%,#7a99c8 48%,#7a99c8 58%,transparent 60%);z-index:1}
.tabs .on{background:#fff}
.tabs .n{width:38px}
.grip{width:8px;height:15px;background:#fff;border:1px solid #6a93bf;display:flex;align-items:center;justify-content:center}
.grip i{width:1px;height:7px;background:#6a93bf}
.hs{flex:0 0 39%;display:flex;align-items:center;background:#7494c3}
.ar{width:18px;display:flex;justify-content:center}
.ar i{border:4px solid transparent;border-right:5px solid #33406a;border-left:0}
.ar.r{width:70px;justify-content:flex-end;padding-right:7px}
.ar.r i{border-right:0;border-left:5px solid #33406a}
.th{flex:1;height:15px;border:1px solid #566a9b;background:linear-gradient(#f6f7f9,#dfe6ee 45%,#a9b9cc 50%,#c5d3e2);display:flex;align-items:center;justify-content:center}
.th i{width:8px;height:8px;background:repeating-linear-gradient(90deg,#75808f 0 1px,transparent 1px 2px)}
.end{width:16px;background:#7d9fd4}`,
`<div class="nav">${['first','prev','next','last'].map(i=>`<button aria-label="${i}">${icon(i)}</button>`).join('')}</div><div class="tabs">${[1,2,3,4,5].map(n=>`<button${n===4?' class="on"':''}>4월${n}주</button>`).join('')}<button class="n" aria-label="워크시트 삽입">${icon('newsheet')}</button></div><div class="grip"><i></i></div><div class="hs"><div class="ar"><i></i></div><div class="th"><i></i></div><div class="ar r"><i></i></div></div><div class="grip"><i></i></div><div class="end"></div>`);

define('status-bar',`
:host{display:flex;align-items:stretch;height:21px;background:linear-gradient(#d7e6fb,#c4dafa 30%,#b1cdf3 35%,#d8e8fc);border-top:1px solid #fff}
.r{width:40px;border-right:1px solid #9ab8e0;text-align:center;line-height:18px;padding-right:3px}
.fill{flex:1}
.v{display:flex;align-items:center;width:250px;padding:0 5px 2px 6px;background:linear-gradient(#9dbfee,#7da6e0 40%,#a9c8f4);border-left:1px solid #6f93c6}
.b{display:flex;border:1px solid #6f93c6;background:#c9dcf6;border-radius:2px;margin-right:8px}
.b .on{background:linear-gradient(#fbd9a0,#fec661)}
.p{width:40px}
input{flex:1;min-width:0;appearance:none;background:linear-gradient(#e4eefb,#e4eefb) center/100% 1px no-repeat,linear-gradient(#e4eefb,#e4eefb) 51% 50%/1px 8px no-repeat;height:16px}
input::-webkit-slider-thumb{appearance:none;width:10px;height:14px;background:#eef4fc;border:1px solid #4c6690;border-radius:1px 1px 5px 5px}`,
`<span class="r">준비</span><span class="fill"></span><div class="v"><div class="b"><button class="on" aria-label="기본">${icon('vnorm')}</button><button aria-label="페이지 레이아웃">${icon('vpage')}</button><button aria-label="페이지 나누기 미리 보기">${icon('vbreak')}</button></div><span class="p">75%</span><button aria-label="축소">${icon('minus')}</button><input type="range" min="10" max="190" value="75" aria-label="확대/축소"><button aria-label="확대">${icon('plus')}</button></div>`);

define('task-bar',`
:host{display:flex;height:40px;background:linear-gradient(90deg,#8395ac,#a7c0de 60px,#a7c0de calc(100% - 310px),#8494ab calc(100% - 275px));border-top:1px solid #2f3f55;color:#fff}
.apps{display:flex;flex:1;padding-left:8px}
.start{width:52px}
.app{width:54px;margin-right:10px;display:flex;align-items:center;justify-content:center;border:1px solid #47566b;border-radius:3px;background:linear-gradient(135deg,#e2eaf4,#bccde2)}
.st{box-shadow:inset 0 0 0 1px #eef4fb,4px 0 0 -1px #b9cbe2,5px 0 0 -1px #47566b;margin-right:8px}
.wide{width:59px}
.plain{border-color:transparent;background:none;width:44px}
.tray{display:flex;align-items:center}
.tray svg{margin-right:6px}
.tray .g svg{margin-right:3px}
.a{font:24px/24px "Liberation Serif",serif;margin-right:2px}
.h{font-size:17px;line-height:20px;margin-right:10px}
.u{margin-right:3px}
.clock{text-align:center;line-height:17px;width:90px}
.desk{width:14px;align-self:stretch;border:1px solid #56637a;background:linear-gradient(#98a3b3,#5b6675 50%,#8b98ab)}`,
`<div class="apps"><button class="start" aria-label="시작">${icon('start')}</button><button class="app st" aria-label="Internet Explorer">${icon('ie')}</button><button class="app wide" aria-label="탐색기">${icon('folder')}</button><button class="app plain" aria-label="Chrome">${icon('chrome')}</button><button class="app st" aria-label="Excel">${icon('xl')}</button></div>
<div class="tray"><span class="g">${icon('globe')}</span><span class="a">A</span><span class="h">漢</span><span class="u">${icon('up')}</span>${icon('flag')}${icon('net')}${icon('vol')}<div class="clock">오후 3:46<br>2020-05-08</div><button class="desk" aria-label="바탕 화면 보기"></button></div>`);
</script>
</body>
</html>
